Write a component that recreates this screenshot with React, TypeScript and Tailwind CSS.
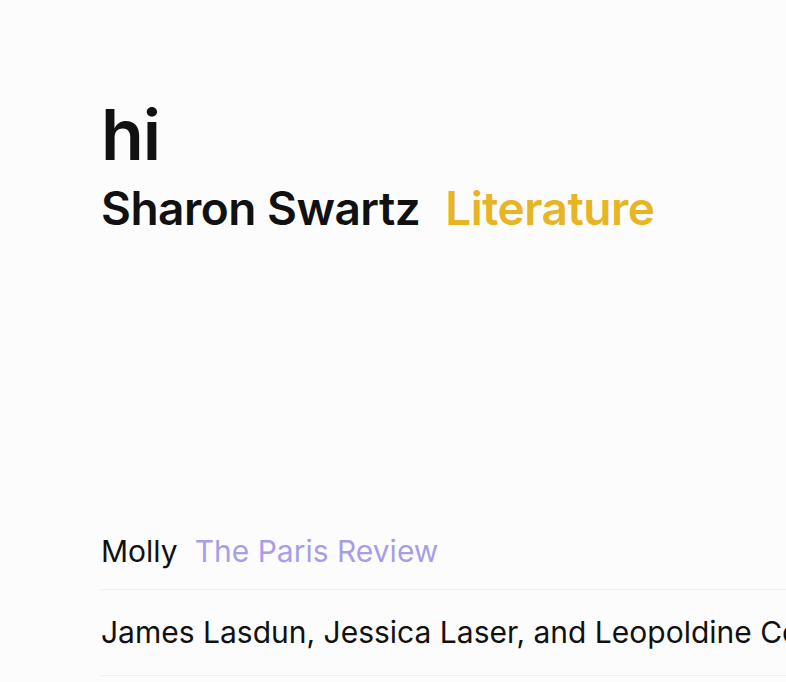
import React from 'react';

function App() {
  return (
    <div
      className="min-h-screen w-full overflow-hidden bg-[#fcfcfc] text-[#111]"
      style={{ fontFamily: 'Inter, "Noto Sans", sans-serif' }}
    >
      <div className="pl-[101px] pt-[95px]">
        {/* Header */}
        <h1 className="text-[70px] font-semibold leading-[80px] tracking-[-1px]">hi</h1>
        <div className="mt-[8px] flex items-baseline gap-[25px] text-[46px] font-semibold leading-[50px] tracking-[-0.5px]">
          <span>Sharon Swartz</span>
          <span className="text-[#e7b523]">Literature</span>
        </div>

        {/* List */}
        <div className="mt-[298px]">
          <div className="flex items-baseline gap-[17px] text-[30px] leading-[40px] pb-[18px]">
            <span>Molly</span>
            <span className="text-[#a99ee6]">The Paris Review</span>
          </div>
          <div className="border-t border-[#efefef]" />
          <div className="text-[30px] leading-[40px] pt-[22px] pb-[23px] whitespace-nowrap">
            James Lasdun, Jessica Laser, and Leopoldine Core
          </div>
          <div className="border-t border-[#efefef]" />
        </div>
      </div>
    </div>
  );
}

export default App;
